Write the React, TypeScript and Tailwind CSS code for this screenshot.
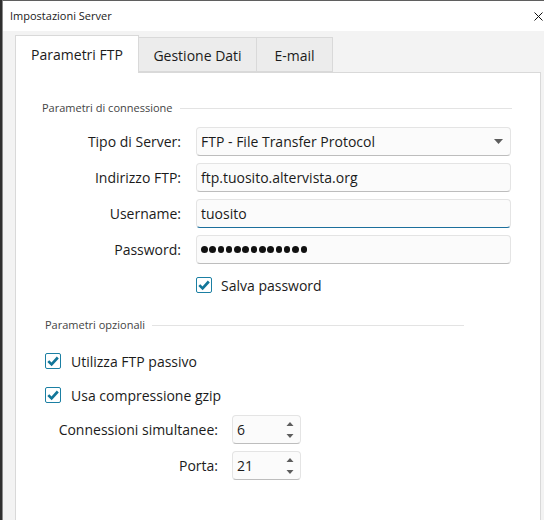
import React from 'react';

const font = { fontFamily: '"Open Sans", "Noto Sans", sans-serif' };

const Check: React.FC = () => (
  <span className="flex h-4 w-4 shrink-0 items-center justify-center rounded-[2px] border border-[#1b7fa3] bg-white">
    <svg width="14" height="14" viewBox="0 0 14 14">
      <path d="M2.3 7.1 L5.6 10.4 L11.8 3.5" fill="none" stroke="#127699" strokeWidth="2.7" />
    </svg>
  </span>
);

const GroupLabel: React.FC<{ text: string; className: string; lineClass: string }> = ({ text, className, lineClass }) => (
  <div className={`flex h-4 items-center ${className}`}>
    <span className="text-[11px] leading-4 text-[#444]">{text}</span>
    <span className={`h-px bg-[#e3e3e3] ${lineClass}`} />
  </div>
);

const Field: React.FC<{ label: string; children: React.ReactNode; focused?: boolean }> = ({ label, children, focused }) => (
  <div className="flex h-[29px] items-center">
    <span className="w-[165px] text-right">{label}</span>
    <div
      className={`ml-[15px] flex h-[29px] w-[315px] items-center rounded-[4px] border border-[#e4e4e4] bg-[#fbfbfb] pl-[4px] ${
        focused ? 'border-b-[#1c6f9c]' : 'border-b-[#bdbdbd]'
      }`}
    >
      {children}
    </div>
  </div>
);

const Spin: React.FC<{ label: string; value: string }> = ({ label, value }) => (
  <div className="flex h-[29px] items-center">
    <span className="w-[202px] text-right">{label}</span>
    <div className="ml-[14px] flex h-[29px] w-[69px] items-center rounded-[4px] border border-[#e4e4e4] border-b-[#bdbdbd] bg-[#fbfbfb] pl-[4px]">
      <span className="flex-1">{value}</span>
      <svg width="8" height="18" viewBox="0 0 8 18" className="mr-[6px]">
        <path d="M0.5 5 L4 1 L7.5 5 Z" fill="#5d5d5d" />
        <path d="M0.5 13 L4 17 L7.5 13 Z" fill="#5d5d5d" />
      </svg>
    </div>
  </div>
);

const App: React.FC = () => {
  return (
    <div className="flex h-[520px] w-[544px] overflow-hidden bg-[#2f2f2f] text-[14px] text-[#1b1b1b]" style={font}>
      <div className="ml-[2px] flex flex-1 flex-col border-l border-t border-l-[#8a8a8a] border-t-[#5f5f5f] bg-[#f3f3f3]">
        {/* title bar */}
        <div className="flex h-[30px] shrink-0 items-center bg-white pl-[7px]">
          <span className="text-[11px] text-[#1a1a1a]">Impostazioni Server</span>
          <svg width="9" height="9" viewBox="0 0 9 9" className="ml-auto mr-[1px]">
            <path d="M0.5 0.5 L8.5 8.5 M8.5 0.5 L0.5 8.5" stroke="#111" strokeWidth="1" />
          </svg>
        </div>

        {/* tabs */}
        <div className="ml-[12px] mt-[4px] flex h-[37px] shrink-0 items-end">
          <div className="relative z-10 -mb-px flex h-[38px] w-[124px] items-center justify-center border border-b-0 border-[#d9d9d9] bg-white pb-[1px]">
            Parametri FTP
          </div>
          <div className="flex h-[35px] w-[118px] items-center justify-center border border-l-0 border-[#d9d9d9] bg-[#ececec] pt-[1px]">
            Gestione Dati
          </div>
          <div className="flex h-[35px] w-[76px] items-center justify-center border border-l-0 border-[#d9d9d9] bg-[#ececec] pt-[1px]">
            E-mail
          </div>
        </div>

        {/* panel */}
        <div className="ml-[12px] mr-[3px] flex-1 border border-b-0 border-[#d9d9d9] bg-white pt-[27px]">
          <GroupLabel text="Parametri di connessione" className="ml-[26px] mr-[28px]" lineClass="ml-2 flex-1" />

          <div className="mt-[11px] flex flex-col gap-[7px]">
            <Field label="Tipo di Server:">
              <span className="flex-1">FTP - File Transfer Protocol</span>
              <svg width="9" height="5" viewBox="0 0 9 5" className="mr-[7px]">
                <path d="M0 0 L9 0 L4.5 5 Z" fill="#5d5d5d" />
              </svg>
            </Field>
            <Field label="Indirizzo FTP:">
              <span>ftp.tuosito.altervista.org</span>
            </Field>
            <Field label="Username:" focused>
              <span>tuosito</span>
            </Field>
            <Field label="Password:">
              <span className="flex gap-[1.8px]">
                {Array.from({ length: 13 }).map((_, i) => (
                  <span key={i} className="h-[6.5px] w-[6.5px] rounded-full bg-[#111]" />
                ))}
              </span>
            </Field>
          </div>

          <label className="ml-[180px] mt-[13px] flex h-4 items-center gap-[9px]">
            <Check />
            <span>Salva password</span>
          </label>

          <GroupLabel text="Parametri opzionali" className="ml-[29px] mr-[76px] mt-[24px]" lineClass="ml-[7px] flex-1" />

          <div className="ml-[29px] mt-[20px] flex flex-col gap-[18px]">
            <label className="flex h-4 items-center gap-[10px]">
              <Check />
              <span>Utilizza FTP passivo</span>
            </label>
            <label className="flex h-4 items-center gap-[10px]">
              <Check />
              <span>Usa compressione gzip</span>
            </label>
          </div>

          <div className="mt-[12px] flex flex-col gap-[7px]">
            <Spin label="Connessioni simultanee:" value="6" />
            <Spin label="Porta:" value="21" />
          </div>
        </div>
      </div>
    </div>
  );
};

export default App;
